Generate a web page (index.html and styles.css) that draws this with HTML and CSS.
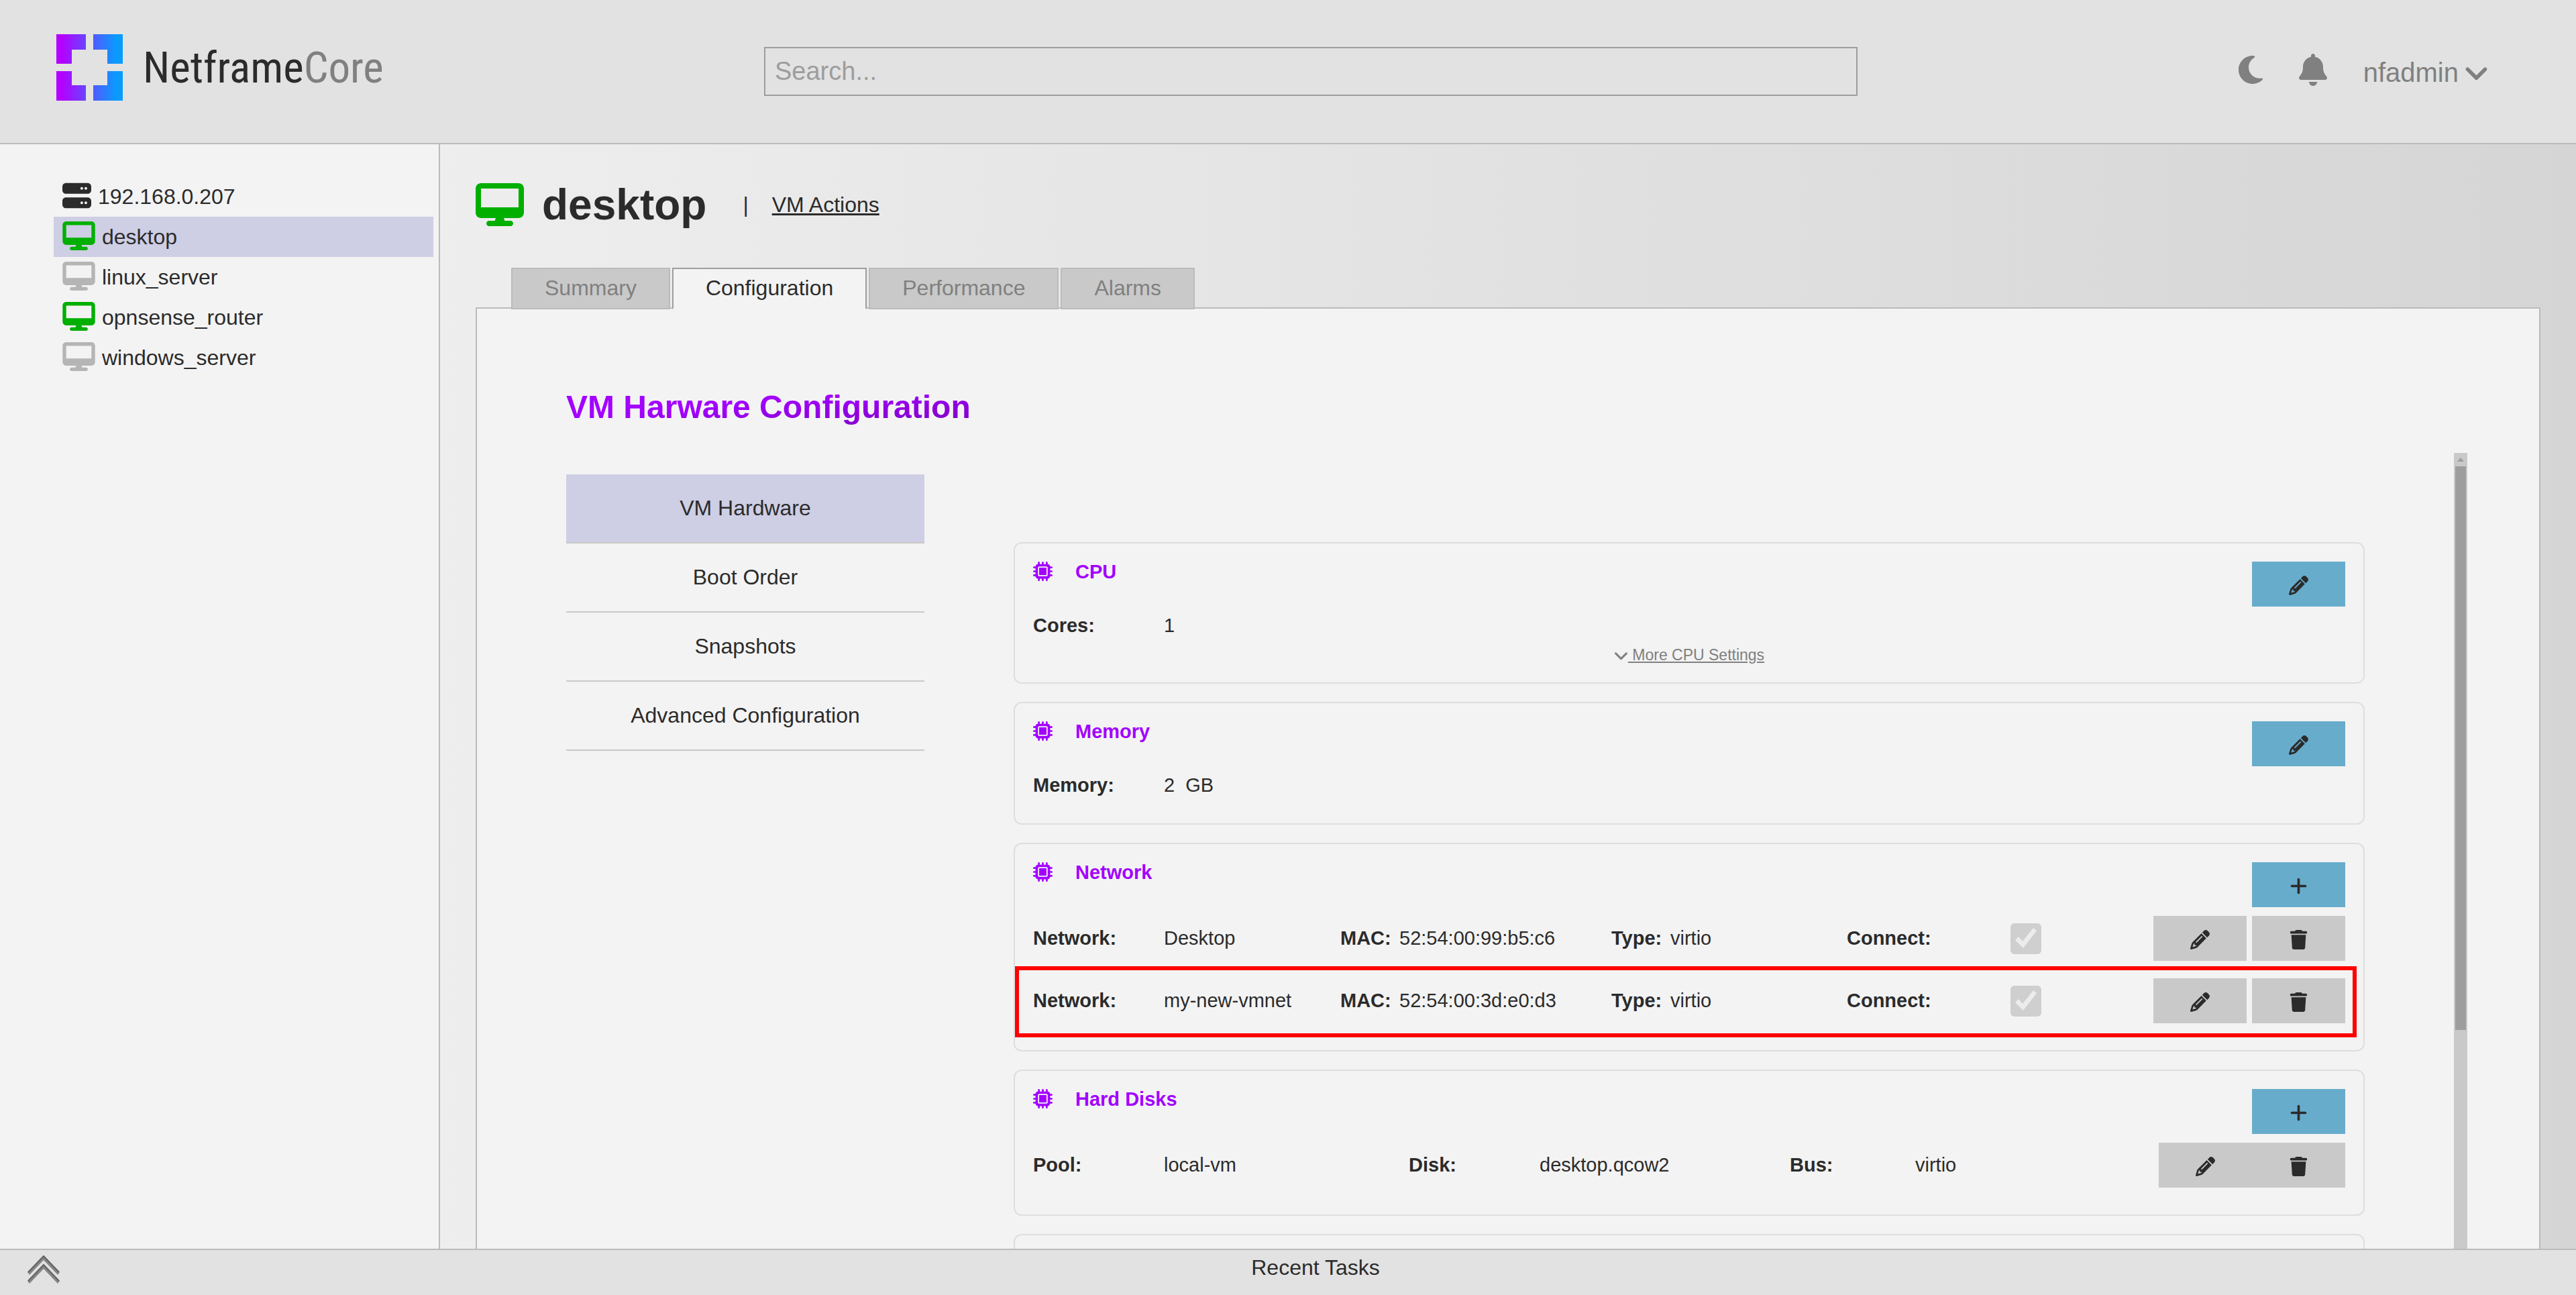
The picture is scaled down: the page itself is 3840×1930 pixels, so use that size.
FILE: index.html
```html
<!DOCTYPE html>
<html lang="en">
<head>
<meta charset="utf-8">
<meta name="viewport" content="width=device-width, initial-scale=1">
<title>NetframeCore</title>
<link rel="stylesheet" href="styles.css">
</head>
<body>
<svg class="sprite" aria-hidden="true">
  <symbol id="i-server" viewBox="0 0 512 512"><path d="M64 32C28.7 32 0 60.7 0 96v64c0 35.3 28.7 64 64 64H448c35.3 0 64-28.7 64-64V96c0-35.3-28.7-64-64-64H64zm280 72a24 24 0 1 1 0 48 24 24 0 1 1 0-48zm48 24a24 24 0 1 1 48 0 24 24 0 1 1 -48 0zM64 288c-35.3 0-64 28.7-64 64v64c0 35.3 28.7 64 64 64H448c35.3 0 64-28.7 64-64V352c0-35.3-28.7-64-64-64H64zm280 72a24 24 0 1 1 0 48 24 24 0 1 1 0-48zm48 24a24 24 0 1 1 48 0 24 24 0 1 1 -48 0z"/></symbol>
  <symbol id="i-desktop" viewBox="0 0 576 512"><path d="M64 0C28.7 0 0 28.7 0 64V352c0 35.3 28.7 64 64 64H240l-10.7 32H160c-17.7 0-32 14.3-32 32s14.3 32 32 32H416c17.7 0 32-14.3 32-32s-14.3-32-32-32H346.7L336 416H512c35.3 0 64-28.7 64-64V64c0-35.3-28.7-64-64-64H64zM512 64V288H64V64H512z"/></symbol>
  <symbol id="i-moon" viewBox="0 0 384 512"><path d="M223.5 32C100 32 0 132.3 0 256S100 480 223.5 480c60.6 0 115.5-24.2 155.8-63.4c5-4.9 6.3-12.5 3.1-18.7s-10.1-9.7-17-8.5c-9.8 1.7-19.8 2.6-30.1 2.6c-96.9 0-175.5-78.8-175.5-176c0-65.8 36-123.1 89.3-153.3c6.1-3.5 9.2-10.5 7.7-17.3s-7.3-11.9-14.3-12.5c-6.3-.5-12.6-.8-19-.8z"/></symbol>
  <symbol id="i-bell" viewBox="0 0 448 512"><path d="M224 0c-17.7 0-32 14.3-32 32V51.2C119 66 64 130.6 64 208v18.8c0 47-17.3 92.4-48.5 127.6l-7.4 8.3c-8.4 9.4-10.4 22.9-5.3 34.4S19.4 416 32 416H416c12.6 0 24-7.4 29.2-18.9s3.1-25-5.3-34.4l-7.4-8.3C401.3 319.2 384 273.9 384 226.8V208c0-77.4-55-142-128-156.8V32c0-17.7-14.3-32-32-32zm45.3 493.3c12-12 18.7-28.3 18.7-45.3H224 160c0 17 6.7 33.3 18.7 45.3s28.3 18.7 45.3 18.7s33.3-6.7 45.3-18.7z"/></symbol>
  <symbol id="i-chevron" viewBox="0 0 512 512"><path stroke="currentColor" stroke-width="18" d="M233.4 406.6c12.5 12.5 32.8 12.5 45.3 0l192-192c12.5-12.5 12.5-32.8 0-45.3s-32.8-12.5-45.3 0L256 338.7 86.6 169.4c-12.5-12.5-32.8-12.5-45.3 0s-12.5 32.8 0 45.3l192 192z"/></symbol>
  <symbol id="i-pencil" viewBox="0 0 512 512"><path d="M410.3 231l11.3-11.3-33.9-33.9-62.1-62.1L291.7 89.8l-11.3 11.3-22.6 22.6L58.6 322.9c-10.4 10.4-18 23.3-22.2 37.4L1 480.7c-2.5 8.4-.2 17.5 6.1 23.7s15.3 8.5 23.7 6.1l120.3-35.4c14.1-4.2 27-11.8 37.4-22.2L387.7 253.7 410.3 231zM160 399.4l-9.1 22.7c-4 3.1-8.5 5.4-13.3 6.9L59.4 452l23-78.1c1.4-4.9 3.8-9.4 6.9-13.3l22.7-9.1v32c0 8.8 7.2 16 16 16h32zM362.7 18.7L348.3 33.2 325.7 55.8 314.3 67.1l33.9 33.9 62.1 62.1 33.9 33.9 11.3-11.3 22.6-22.6 14.5-14.5c25-25 25-65.5 0-90.5L453.3 18.7c-25-25-65.5-25-90.5 0zm-47.4 168l-144 144c-6.2 6.2-16.4 6.2-22.6 0s-6.2-16.4 0-22.6l144-144c6.2-6.2 16.4-6.2 22.6 0s6.2 16.4 0 22.6z"/></symbol>
  <symbol id="i-trash" viewBox="0 0 448 512"><path d="M135.2 17.7L128 32H32C14.3 32 0 46.3 0 64S14.3 96 32 96H416c17.7 0 32-14.3 32-32s-14.3-32-32-32H320l-7.2-14.3C307.4 6.8 296.3 0 284.2 0H163.8c-12.1 0-23.2 6.8-28.6 17.7zM416 128H32L53.2 467c1.6 25.3 22.6 45 47.9 45H346.9c25.3 0 46.3-19.7 47.9-45L416 128z"/></symbol>
  <symbol id="i-plus" viewBox="0 0 448 512"><path d="M256 80c0-17.7-14.3-32-32-32s-32 14.3-32 32V224H48c-17.7 0-32 14.3-32 32s14.3 32 32 32H192V432c0 17.7 14.3 32 32 32s32-14.3 32-32V288H400c17.7 0 32-14.3 32-32s-14.3-32-32-32H256V80z"/></symbol>
  <symbol id="i-chip" viewBox="0 0 512 512"><path d="M176 24c0-13.3-10.7-24-24-24s-24 10.7-24 24V64c-35.3 0-64 28.7-64 64H24c-13.3 0-24 10.7-24 24s10.7 24 24 24H64v56H24c-13.3 0-24 10.7-24 24s10.7 24 24 24H64v56H24c-13.3 0-24 10.7-24 24s10.7 24 24 24H64c0 35.3 28.7 64 64 64v40c0 13.3 10.7 24 24 24s24-10.7 24-24V448h56v40c0 13.3 10.7 24 24 24s24-10.7 24-24V448h56v40c0 13.3 10.7 24 24 24s24-10.7 24-24V448c35.3 0 64-28.7 64-64h40c13.3 0 24-10.7 24-24s-10.7-24-24-24H448V280h40c13.3 0 24-10.7 24-24s-10.7-24-24-24H448V176h40c13.3 0 24-10.7 24-24s-10.7-24-24-24H448c0-35.3-28.7-64-64-64V24c0-13.3-10.7-24-24-24s-24 10.7-24 24V64H280V24c0-13.3-10.7-24-24-24s-24 10.7-24 24V64H176V24zM160 128H352c17.7 0 32 14.3 32 32V352c0 17.7-14.3 32-32 32H160c-17.7 0-32-14.3-32-32V160c0-17.7 14.3-32 32-32zm192 32H160V352H352V160z"/></symbol>
</svg>

<header class="topbar">
  <a class="brand" href="#">
    <svg class="brand-mark" viewBox="0 0 99 99" aria-hidden="true">
      <defs><linearGradient id="brand" gradientUnits="userSpaceOnUse" x1="0" y1="0" x2="99" y2="0"><stop offset="0.08" stop-color="#b400ff"/><stop offset="0.9" stop-color="#0a9bff"/></linearGradient></defs>
      <path fill="url(#brand)" d="M0 0H44V23H23V44H0zM55 0H99V44H76V23H55zM0 55H23V76H44V99H0zM76 55H99V99H55V76H76z"/>
    </svg>
    <span class="brand-name">Netframe<span class="brand-suffix">Core</span></span>
  </a>
  <input class="search" type="search" placeholder="Search..." aria-label="Search">
  <div class="user-tools">
    <button class="tool" aria-label="Dark mode"><svg class="icon-moon"><use href="#i-moon"/></svg></button>
    <button class="tool" aria-label="Notifications"><svg class="icon-bell"><use href="#i-bell"/></svg></button>
    <button class="tool user-menu">nfadmin <svg class="icon-caret" aria-hidden="true"><use href="#i-chevron"/></svg></button>
  </div>
</header>

<div class="workspace">
  <nav class="tree" aria-label="Inventory">
    <a class="tree-item" href="#"><svg class="tree-server"><use href="#i-server"/></svg>192.168.0.207</a>
    <a class="tree-item selected" href="#"><svg class="tree-vm running"><use href="#i-desktop"/></svg>desktop</a>
    <a class="tree-item" href="#"><svg class="tree-vm"><use href="#i-desktop"/></svg>linux_server</a>
    <a class="tree-item" href="#"><svg class="tree-vm running"><use href="#i-desktop"/></svg>opnsense_router</a>
    <a class="tree-item" href="#"><svg class="tree-vm"><use href="#i-desktop"/></svg>windows_server</a>
  </nav>

  <main class="content">
    <div class="title-row">
      <svg class="title-icon"><use href="#i-desktop"/></svg>
      <h1>desktop</h1>
      <span class="divider">|</span>
      <a class="vm-actions" href="#">VM Actions</a>
    </div>

    <div class="tabs" role="tablist">
      <button class="tab" role="tab">Summary</button>
      <button class="tab active" role="tab" aria-selected="true">Configuration</button>
      <button class="tab" role="tab">Performance</button>
      <button class="tab" role="tab">Alarms</button>
    </div>

    <section class="panel">
      <h2>VM Harware Configuration</h2>
      <div class="config">
        <nav class="config-nav" aria-label="Configuration sections">
          <a class="current" href="#">VM Hardware</a>
          <a href="#">Boot Order</a>
          <a href="#">Snapshots</a>
          <a href="#">Advanced Configuration</a>
        </nav>

        <div class="cards">
          <section class="card">
            <div class="card-head">
              <h3><svg class="chip"><use href="#i-chip"/></svg>CPU</h3>
              <button class="action primary" aria-label="Edit CPU"><svg><use href="#i-pencil"/></svg></button>
            </div>
            <div class="row row-simple"><b>Cores:</b><span>1</span></div>
            <div class="more"><svg><use href="#i-chevron"/></svg><a href="#">&nbsp;More CPU Settings</a></div>
          </section>

          <section class="card">
            <div class="card-head">
              <h3><svg class="chip"><use href="#i-chip"/></svg>Memory</h3>
              <button class="action primary" aria-label="Edit memory"><svg><use href="#i-pencil"/></svg></button>
            </div>
            <div class="row row-simple"><b>Memory:</b><span class="amount"><span>2</span><span>GB</span></span></div>
          </section>

          <section class="card">
            <div class="card-head">
              <h3><svg class="chip"><use href="#i-chip"/></svg>Network</h3>
              <button class="action primary" aria-label="Add network"><svg><use href="#i-plus"/></svg></button>
            </div>
            <div class="row row-network">
              <b>Network:</b><span>Desktop</span><b>MAC:</b><span>52:54:00:99:b5:c6</span><b>Type:</b><span>virtio</span>
              <label for="connect-1">Connect:</label><input id="connect-1" type="checkbox" checked disabled>
              <div class="actions spaced">
                <button class="action" aria-label="Edit network"><svg><use href="#i-pencil"/></svg></button>
                <button class="action" aria-label="Delete network"><svg><use href="#i-trash"/></svg></button>
              </div>
            </div>
            <div class="row row-network highlighted">
              <b>Network:</b><span>my-new-vmnet</span><b>MAC:</b><span>52:54:00:3d:e0:d3</span><b>Type:</b><span>virtio</span>
              <label for="connect-2">Connect:</label><input id="connect-2" type="checkbox" checked disabled>
              <div class="actions spaced">
                <button class="action" aria-label="Edit network"><svg><use href="#i-pencil"/></svg></button>
                <button class="action" aria-label="Delete network"><svg><use href="#i-trash"/></svg></button>
              </div>
            </div>
          </section>

          <section class="card">
            <div class="card-head">
              <h3><svg class="chip"><use href="#i-chip"/></svg>Hard Disks</h3>
              <button class="action primary" aria-label="Add disk"><svg><use href="#i-plus"/></svg></button>
            </div>
            <div class="row row-disk">
              <b>Pool:</b><span>local-vm</span><b>Disk:</b><span>desktop.qcow2</span><b>Bus:</b><span>virtio</span>
              <div class="actions">
                <button class="action" aria-label="Edit disk"><svg><use href="#i-pencil"/></svg></button>
                <button class="action" aria-label="Delete disk"><svg><use href="#i-trash"/></svg></button>
              </div>
            </div>
          </section>

          <section class="card card-next"></section>
        </div>

        <div class="scrollbar" aria-hidden="true">
          <div class="scroll-up"><svg viewBox="0 0 10 6"><path d="M5 0L10 6H0z"/></svg></div>
          <div class="scroll-track"><div class="scroll-thumb"></div></div>
        </div>
      </div>
    </section>
  </main>
</div>

<footer class="tasks">
  <button class="expand" aria-label="Expand tasks">
    <svg viewBox="0 0 48 42" aria-hidden="true">
      <g fill="#868686"><path d="M24 0L48 25L45 29L24 7L3 29L0 25z"/><path d="M24 13L48 38L45 42L24 20L3 42L0 38z"/></g>
      <g fill="none" stroke="#636363" stroke-width="2"><path d="M1 25L24 1L47 25"/><path d="M1 38L24 14L47 38"/></g>
    </svg>
  </button>
  <div class="tasks-title">Recent Tasks</div>
</footer>
</body>
</html>
```
FILE: styles.css
```css
:root {
  --ink: #2b2b2b;
  --muted: #808080;
  --line: #bbbbbb;
  --surface: #f3f3f3;
  --bar: #e2e2e2;
  --selected: #cecee4;
  --purple: #a200ff;
}

* { box-sizing: border-box; }

body {
  margin: 0;
  height: 100vh;
  display: flex;
  flex-direction: column;
  overflow: hidden;
  color: var(--ink);
  background: var(--surface);
  font: 32px/36px "Liberation Sans", Arial, sans-serif;
}

a { color: inherit; text-decoration: none; }
svg { fill: currentColor; flex: none; display: block; }
button { font: inherit; color: inherit; border: 0; padding: 0; background: none; }
h1, h2, h3 { margin: 0; }
.sprite { display: none; }

/* Top bar */
.topbar {
  display: grid;
  grid-template-columns: 1055fr 1630fr 1071fr;
  align-items: center;
  height: 215px;
  flex: none;
  padding-left: 84px;
  background: var(--bar);
  border-bottom: 2px solid var(--line);
}
.brand { display: flex; align-items: center; gap: 30px; margin-bottom: 12px; }
.brand-mark { width: 99px; height: 99px; }
.brand-name { font: 65px/76px "Roboto Condensed", Roboto, sans-serif; }
.brand-suffix { color: var(--muted); }
.search {
  height: 73px;
  width: 100%;
  padding: 0 14px;
  border: 2px solid #9d9d9d;
  border-radius: 0;
  background: transparent;
  color: var(--ink);
  font: inherit;
  font-size: 38px;
  appearance: none;
}
.search::placeholder { color: #9d9d9d; }
.user-tools {
  display: flex;
  align-items: center;
  justify-content: flex-end;
  gap: 54px;
  padding-right: 131px;
  color: var(--muted);
}
.tool { padding-bottom: 5px; }
.icon-moon { width: 36px; height: 48px; }
.icon-bell { width: 42px; height: 48px; }
.user-menu { display: flex; align-items: center; gap: 9px; padding: 2px 0 0; font-size: 40px; line-height: 46px; }
.icon-caret { width: 35px; height: 35px; }

/* Inventory tree */
.workspace { display: flex; flex: 1; min-height: 0; }
.tree {
  flex: none;
  width: 656px;
  padding: 48px 8px 0 80px;
  border-right: 2px solid var(--line);
}
.tree-item { display: flex; align-items: center; gap: 10px; height: 60px; padding-left: 13px; }
.tree-item.selected { background: var(--selected); }
.tree-item svg { margin-bottom: 4px; height: 43px; }
.tree-server { width: 43px; }
.tree-vm { width: 49px; color: #b5b5b5; }
.running { color: #00af00; }

/* Main area */
.content {
  flex: 1;
  min-width: 0;
  display: flex;
  flex-direction: column;
  padding: 58px 53px 0;
  overflow: hidden;
  background: linear-gradient(to right, #eeeeee, #d5d5d5);
}
.title-row { display: flex; align-items: center; height: 64px; }
.title-icon { width: 72px; height: 64px; color: #00af00; }
.title-row h1 { margin-left: 27px; font-size: 64px; line-height: 64px; }
.divider { margin: 0 35px 0 54px; }
.vm-actions { text-decoration: underline; }

.tabs { display: flex; gap: 3px; margin: 62px 0 -3px 53px; position: relative; z-index: 1; }
.tab {
  height: 62px;
  padding: 0 48px 2px;
  border: 2px solid var(--line);
  background: #c9c9c9;
  color: var(--muted);
}
.tab.active {
  background: var(--surface);
  color: var(--ink);
  border-color: #9d9d9d;
  border-bottom-color: var(--surface);
}

.panel {
  flex: 1;
  min-height: 0;
  display: flex;
  flex-direction: column;
  padding: 119px 107px 0 133px;
  border: 2px solid var(--line);
  border-bottom: 0;
  background: var(--surface);
}
.panel h2 {
  align-self: flex-start;
  font-size: 48px;
  line-height: 56px;
  background: linear-gradient(to bottom right, var(--purple) 40%, #7c00be);
  background-clip: text;
  color: transparent;
}
.config {
  flex: 1;
  min-height: 0;
  display: grid;
  grid-template-columns: 534fr 2014fr 20px;
  grid-template-rows: minmax(0, 1fr);
  column-gap: 133px;
  margin-top: 40px;
}
.config-nav { padding-top: 32px; }
.config-nav a {
  display: block;
  height: 103px;
  padding: 32px 0;
  text-align: center;
  border-bottom: 2px solid #c9c9c9;
}
.config-nav .current { background: var(--selected); }

/* Hardware cards */
.cards {
  display: flex;
  flex-direction: column;
  gap: 27px;
  padding-top: 133px;
  overflow: hidden;
  font-size: 29px;
  line-height: 32px;
}
.card { flex: none; padding: 27px; border: 2px solid #dedede; border-radius: 12px; }
.card-next { height: 200px; }
.card-head { display: flex; justify-content: space-between; align-items: flex-start; }
.card-head h3 { display: flex; gap: 34px; font-size: 29px; line-height: 30px; color: var(--purple); }
.chip { width: 29px; height: 29px; }
.action {
  display: grid;
  place-items: center;
  width: 139px;
  height: 67px;
  padding-top: 4px;
  background: #c9c9c9;
}
.action svg { width: 29px; height: 29px; }
.action.primary { background: #68accc; }
.actions { display: flex; justify-content: flex-end; }
.actions.spaced { gap: 8px; }

.row { display: grid; align-items: center; padding: 13px 0; }
.row b, .row span, .row label { padding-bottom: 2px; line-height: 30px; }
.row-simple { grid-template-columns: 195fr 1761fr; }
.row-network { grid-template-columns: 195fr 263fr 88fr 316fr 88fr 263fr 244fr 213fr 286px; }
.row-disk { grid-template-columns: 195fr 365fr 195fr 373fr 187fr 363fr 278px; }
.row label { font-weight: bold; }
.row .amount { display: flex; gap: 16px; padding: 0; }
.row input {
  appearance: none;
  width: 46px;
  height: 46px;
  margin: 0;
  border-radius: 6px;
  background: #cfcfcf url("data:image/svg+xml,%3Csvg xmlns='http://www.w3.org/2000/svg' viewBox='0 0 46 46'%3E%3Cpath fill='%23ececec' d='M7 25L12 20L18 27L34 7L39 11L19 37z'/%3E%3C/svg%3E");
}
.highlighted { position: relative; }
.highlighted::after {
  content: "";
  position: absolute;
  inset: -5px -17px -8px -27px;
  border: 6px solid #ff0000;
  pointer-events: none;
}
.more {
  display: flex;
  align-items: center;
  justify-content: center;
  font-size: 23px;
  line-height: 28px;
  color: var(--muted);
}
.more svg { width: 21px; height: 21px; }
.more a { text-decoration: underline; }

.scrollbar { display: flex; flex-direction: column; background: #c9c9c9; }
.scroll-up { display: grid; place-items: center; height: 20px; color: #9d9d9d; }
.scroll-up svg { width: 10px; height: 6px; }
.scroll-track { flex: 1; padding: 0 2px; }
.scroll-thumb { height: 72%; background: #9d9d9d; }

/* Task bar */
.tasks {
  display: flex;
  align-items: flex-start;
  flex: none;
  height: 69px;
  padding: 8px 7px 0 0;
  background: var(--bar);
  border-top: 2px solid var(--line);
}
.expand { padding: 0 0 0 41px; }
.expand svg { width: 48px; height: 42px; }
.tasks-title { flex: 1; text-align: center; }
```
